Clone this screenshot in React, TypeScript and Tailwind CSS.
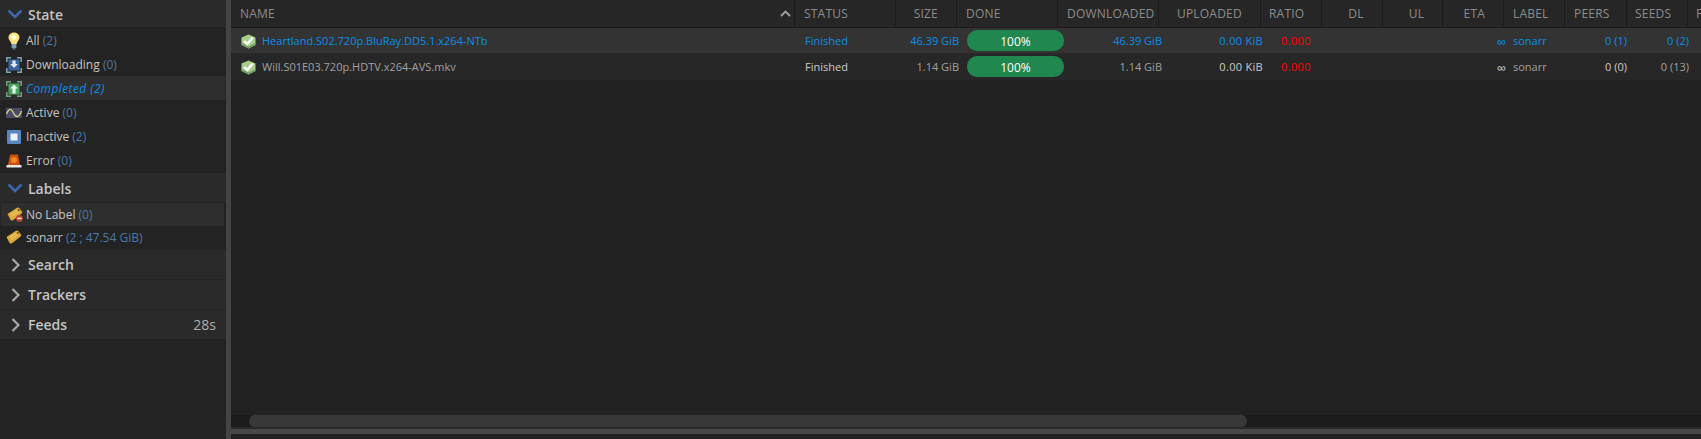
import type { ReactNode } from 'react';

const font = { fontFamily: '"Open Sans", "Noto Sans", sans-serif' };

function Chevron({ open }: { open: boolean }) {
  if (open) {
    return (
      <svg width="16" height="10" viewBox="0 0 16 10" className="shrink-0">
        <path d="M1.5 1.5 L8 8 L14.5 1.5" fill="none" stroke="#3f66ad" strokeWidth="2.6" />
      </svg>
    );
  }
  return (
    <svg width="9" height="14" viewBox="0 0 9 14" className="shrink-0">
      <path d="M1.5 1 L7.5 7 L1.5 13" fill="none" stroke="#a8a8a8" strokeWidth="2.2" />
    </svg>
  );
}

function Bulb() {
  return (
    <svg width="12" height="18" viewBox="0 0 12 18">
      <path d="M6 0.5 C9.2 0.5 11.5 2.8 11.5 5.6 C11.5 8.3 9 9.6 8.6 12 L3.4 12 C3 9.6 0.5 8.3 0.5 5.6 C0.5 2.8 2.8 0.5 6 0.5 Z" fill="#f7e27c" />
      <circle cx="6" cy="5" r="2.6" fill="#fffbd8" />
      <rect x="3.6" y="12" width="4.8" height="4" fill="#7f9fb4" />
      <rect x="4.6" y="16" width="2.8" height="1.6" fill="#56758a" />
    </svg>
  );
}

function Corners({ color }: { color: string }) {
  return (
    <path
      d="M0.8 5 V0.8 H5 M11 0.8 H15.2 V5 M15.2 11 V15.2 H11 M5 15.2 H0.8 V11"
      fill="none"
      stroke={color}
      strokeWidth="1.5"
    />
  );
}

function DownloadIcon() {
  return (
    <svg width="16" height="16" viewBox="0 0 16 16">
      <Corners color="#7fa6b0" />
      <rect x="2.5" y="2.5" width="11" height="11" fill="#3a659f" />
      <path d="M6.4 3.5 H9.6 V7 H11.8 L8 11 L4.2 7 H6.4 Z" fill="#dfe8f4" />
    </svg>
  );
}

function CompletedIcon() {
  return (
    <svg width="16" height="16" viewBox="0 0 16 16">
      <Corners color="#75a27e" />
      <rect x="2.5" y="2.5" width="11" height="11" fill="#4da565" />
      <path d="M8 3.5 L11.8 7.6 H9.6 V12.5 H6.4 V7.6 H4.2 Z" fill="#e6f3e4" />
    </svg>
  );
}

function ActiveIcon() {
  return (
    <svg width="16" height="11" viewBox="0 0 16 11">
      <rect width="16" height="10" fill="#4b4b63" />
      <path d="M0.5 6 C3 0 5 0 7.5 5 C10 10 13 10 15.5 3" fill="none" stroke="#d9d68c" strokeWidth="1.3" />
    </svg>
  );
}

function InactiveIcon() {
  return (
    <svg width="14" height="14" viewBox="0 0 14 14">
      <rect width="14" height="14" rx="1" fill="#5a86c0" />
      <rect x="3.5" y="3.5" width="7" height="7" fill="#eef1f6" />
    </svg>
  );
}

function ErrorIcon() {
  return (
    <svg width="16" height="14" viewBox="0 0 16 14">
      <path d="M4 0.5 H12 L14 11 H2 Z" fill="#c9500f" />
      <circle cx="8" cy="6" r="3" fill="#f08a1c" />
      <rect x="0.5" y="11" width="15" height="2.5" fill="#e6e6e6" />
    </svg>
  );
}

function TagIcon({ blocked }: { blocked?: boolean }) {
  return (
    <svg width="16" height="15" viewBox="0 0 16 15">
      <path d="M0.5 7 L10 0.8 Q11.5 0.2 12.4 1.2 L15 4.6 Q15.6 5.8 14.6 6.6 L6 13.2 Q4.6 14 3.6 13 Z" fill="#dba93a" />
      <path d="M3.5 7.6 L10 3.4 M5 9.4 L11.4 5" stroke="#f2d277" strokeWidth="1" />
      <circle cx="11.8" cy="3" r="0.9" fill="#5a4210" />
      {blocked && (
        <g>
          <circle cx="12.4" cy="11.4" r="3.4" fill="#b9402c" />
          <rect x="10.2" y="10.6" width="4.4" height="1.6" fill="#f4e6e0" />
        </g>
      )}
    </svg>
  );
}

function CheckIcon() {
  return (
    <svg width="15" height="15" viewBox="0 0 15 15">
      <path d="M7.5 0.5 L14.5 3.5 V11 L7.5 14.5 L0.5 11 V3.5 Z" fill="#a6cf8a" />
      <path d="M7.5 14.5 L14.5 11 V9 L7.5 12.5 L0.5 9 V11 Z" fill="#6f9c62" />
      <path d="M3.2 7 L6.2 10 L11.8 3.6" fill="none" stroke="#ffffff" strokeWidth="2.4" />
    </svg>
  );
}

function SectionHead({ title, open, right, className }: { title: string; open: boolean; right?: string; className: string }) {
  return (
    <div className={`flex items-center bg-[#2a2a2a] border-b border-[#232323] shrink-0 ${className}`}>
      <div className="w-[28px] flex justify-center pl-[2px] shrink-0">
        <Chevron open={open} />
      </div>
      <span className={`text-[14px] font-semibold text-[#c4c4c4] ${open ? 'pt-[2px]' : ''}`}>{title}</span>
      {right && <span className="ml-auto pr-[10px] text-[14px] text-[#b0b0b0]">{right}</span>}
    </div>
  );
}

function Filter({
  icon,
  label,
  count,
  active,
  boxed,
  className,
}: {
  icon: ReactNode;
  label: string;
  count: string;
  active?: boolean;
  boxed?: boolean;
  className: string;
}) {
  return (
    <div
      className={`flex items-center text-[12px] ${className} ${
        active ? 'bg-[#2e2e2e] italic text-[#0a8ee6] mr-[1px] tracking-[0.4px]' : 'text-[#c4c4c4]'
      } ${boxed ? 'bg-[#2e2e2e] ml-[1px] mr-[2px]' : ''}`}
    >
      <div className={`${boxed ? 'w-[25px]' : 'w-[26px]'} flex justify-center pl-[2px] shrink-0`}>{icon}</div>
      <span>
        {label} <span className={active ? '' : 'text-[#4d78a6]'}>{count}</span>
      </span>
    </div>
  );
}

function HeadCell({ className, children }: { className: string; children?: ReactNode }) {
  return (
    <div className={`h-full shrink-0 flex items-center border-r border-[#1b1b1b] text-[12px] tracking-[0.2px] text-[#8c8c8c] ${className}`}>
      {children}
    </div>
  );
}

function Torrent({
  name,
  size,
  selected,
  colors,
  peers,
  seeds,
}: {
  name: string;
  size: string;
  selected?: boolean;
  colors: { name: string; status: string; size: string; up: string; label: string; peers: string; seeds: string };
  peers: string;
  seeds: string;
}) {
  return (
    <div className={`flex items-center pt-[2px] text-[11px] ${selected ? 'h-[25px] bg-[#333333]' : 'h-[27px] bg-[#272727]'}`}>
      <div className="w-[574px] shrink-0 flex items-center pl-[10px]">
        <CheckIcon />
        <span className={`ml-[6px] ${colors.name}`}>{name}</span>
      </div>
      <div className={`w-[101px] shrink-0 ${colors.status}`}>Finished</div>
      <div className={`w-[53px] shrink-0 text-right ${colors.size}`}>{size}</div>
      <div className="w-[8px] shrink-0" />
      <div className="w-[97px] h-[21px] -mt-[2px] shrink-0 rounded-[10px] bg-[#20874f] text-center text-white text-[12px] leading-[23px]">100%</div>
      <div className={`w-[98px] shrink-0 text-right ${colors.size}`}>{size}</div>
      <div className={`w-[101px] shrink-0 text-right tracking-[0.3px] ${colors.up}`}>0.00 KiB</div>
      <div className="w-[48px] shrink-0 text-right tracking-[0.4px] text-[#ff0000]">0.000</div>
      <div className={`w-[195px] shrink-0 text-right text-[13px] leading-[14px] ${colors.up}`}>∞</div>
      <div className={`w-[62px] shrink-0 pl-[7px] ${colors.label}`}>sonarr</div>
      <div className={`w-[59px] shrink-0 text-right ${colors.peers}`}>{peers}</div>
      <div className={`w-[62px] shrink-0 text-right ${colors.seeds}`}>{seeds}</div>
    </div>
  );
}

const blue = 'text-[#0a8ee6]';

export default function App() {
  return (
    <div className="w-[1701px] h-[439px] flex bg-[#222222] overflow-hidden" style={font}>
      {/* Sidebar */}
      <aside className="w-[226px] shrink-0 bg-[#232323] flex flex-col">
        <SectionHead title="State" open className="h-[28px]" />
        <Filter className="h-[24px] pt-[2px]" icon={<Bulb />} label="All" count="(2)" />
        <Filter className="h-[24px] pt-[2px]" icon={<DownloadIcon />} label="Downloading" count="(0)" />
        <Filter className="h-[24px] pt-[2px]" icon={<CompletedIcon />} label="Completed" count="(2)" active />
        <Filter className="h-[24px] pt-[2px]" icon={<ActiveIcon />} label="Active" count="(0)" />
        <Filter className="h-[24px] pt-[2px]" icon={<InactiveIcon />} label="Inactive" count="(2)" />
        <Filter className="h-[24px] pt-[2px]" icon={<ErrorIcon />} label="Error" count="(0)" />
        <SectionHead title="Labels" open className="h-[30px] mt-[1px]" />
        <Filter className="h-[23px]" icon={<TagIcon blocked />} label="No Label" count="(0)" boxed />
        <Filter className="h-[23px]" icon={<TagIcon />} label="sonarr" count="(2 ; 47.54 GiB)" />
        <SectionHead title="Search" open={false} className="h-[30px] mt-[1px]" />
        <SectionHead title="Trackers" open={false} className="h-[30px]" />
        <SectionHead title="Feeds" open={false} right="28s" className="h-[30px]" />
      </aside>
      <div className="w-[5px] shrink-0 bg-[#444444]" />

      {/* Torrent list */}
      <main className="flex-1 min-w-0 flex flex-col">
        <div className="h-[28px] shrink-0 flex bg-[#262626] border-b border-[#1b1b1b] overflow-hidden">
          <HeadCell className="w-[564px] pl-[9px] justify-between pr-[3px]">
            <span>NAME</span>
            <svg width="11" height="7" viewBox="0 0 11 7">
              <path d="M1 6 L5.5 1.5 L10 6" fill="none" stroke="#a0a0a0" strokeWidth="1.8" />
            </svg>
          </HeadCell>
          <HeadCell className="w-[101px] pl-[9px]">STATUS</HeadCell>
          <HeadCell className="w-[61px] justify-end pr-[18px]">SIZE</HeadCell>
          <HeadCell className="w-[101px] pl-[9px]">DONE</HeadCell>
          <HeadCell className="w-[101px] pl-[9px]">DOWNLOADED</HeadCell>
          <HeadCell className="w-[102px] pl-[18px]">UPLOADED</HeadCell>
          <HeadCell className="w-[61px] pl-[8px]">RATIO</HeadCell>
          <HeadCell className="w-[61px] justify-center pl-[8px]">DL</HeadCell>
          <HeadCell className="w-[60px] justify-center pl-[8px]">UL</HeadCell>
          <HeadCell className="w-[61px] justify-end pr-[18px]">ETA</HeadCell>
          <HeadCell className="w-[61px] pl-[9px]">LABEL</HeadCell>
          <HeadCell className="w-[62px] pl-[9px]">PEERS</HeadCell>
          <HeadCell className="w-[61px] pl-[8px]">SEEDS</HeadCell>
          <HeadCell className="w-[40px] pl-[8px]">F</HeadCell>
        </div>
        <Torrent
          name="Heartland.S02.720p.BluRay.DD5.1.x264-NTb"
          size="46.39 GiB"
          selected
          peers="0 (1)"
          seeds="0 (2)"
          colors={{ name: blue, status: blue, size: blue, up: blue, label: blue, peers: blue, seeds: blue }}
        />
        <Torrent
          name="Will.S01E03.720p.HDTV.x264-AVS.mkv"
          size="1.14 GiB"
          peers="0 (0)"
          seeds="0 (13)"
          colors={{
            name: 'text-[#a0a0a0]',
            status: 'text-[#cccccc]',
            size: 'text-[#a0a0a0]',
            up: 'text-[#cccccc]',
            label: 'text-[#a0a0a0]',
            peers: 'text-[#cccccc]',
            seeds: 'text-[#a0a0a0]',
          }}
        />
        <div className="flex-1" />
        <div className="h-[12px] shrink-0 bg-[#1c1c1c] pl-[18px]">
          <div className="w-[998px] h-full rounded-[6px] bg-[#383838]" />
        </div>
        <div className="h-[2px] shrink-0 bg-[#2a2a2a]" />
        <div className="h-[5px] shrink-0 bg-[#484848]" />
        <div className="h-[5px] shrink-0 bg-[#222222]" />
      </main>
    </div>
  );
}
